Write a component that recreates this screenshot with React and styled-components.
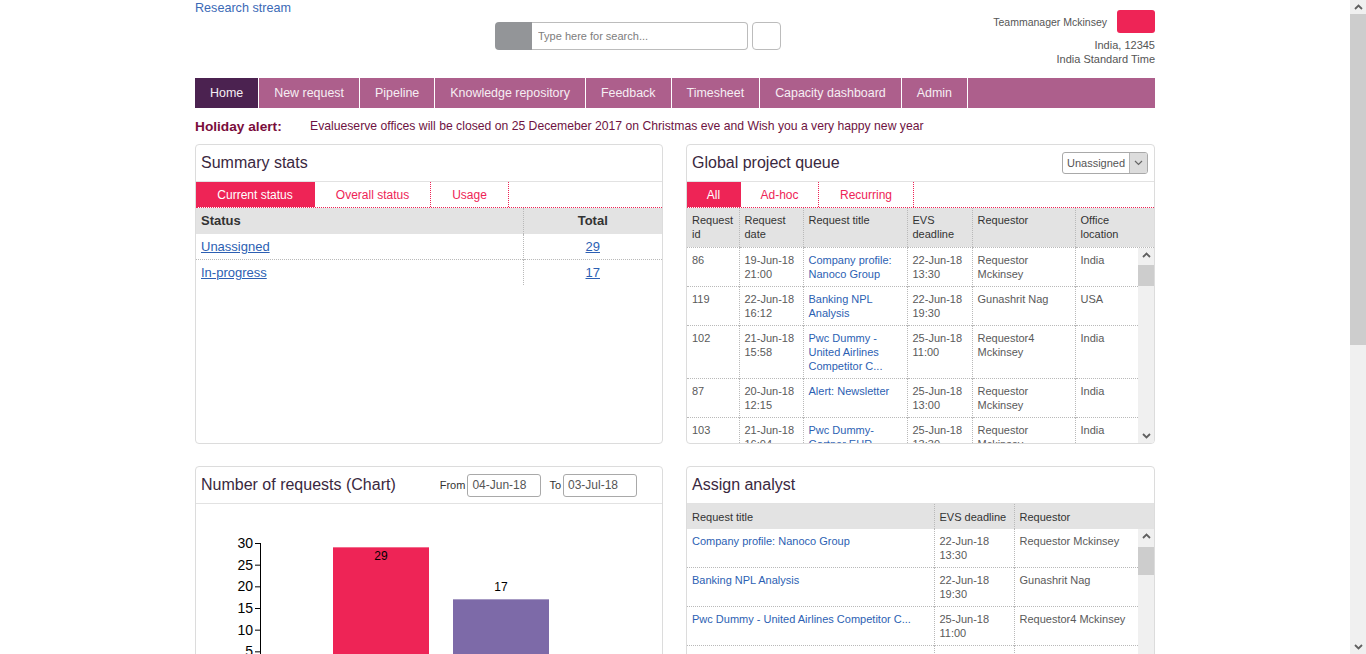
import React from 'react';
import styled, { createGlobalStyle } from 'styled-components';

const GlobalStyle = createGlobalStyle`
  html, body {
    margin: 0;
    padding: 0;
    background: #fff;
    font-family: "Liberation Sans", Arial, sans-serif;
  }
`;

const Shell = styled.div`
  padding-right: 16px;
  min-height: 1235px;
`;

const Page = styled.div`
  width: 960px;
  margin: 0 auto;
`;

const TopBar = styled.div`
  display: grid;
  grid-template-columns: 300px 286px 1fr;
  height: 78px;
`;

const Brand = styled.a`
  display: block;
  font-size: 12.6px;
  line-height: 16px;
  color: #3b69b6;
  text-decoration: none;
`;

const SearchGroup = styled.div`
  display: flex;
  align-items: center;
  margin-top: 22px;
  height: 28px;
`;

const SearchAddon = styled.div`
  width: 37px;
  height: 28px;
  background: #939598;
  border-radius: 4px 0 0 4px;
`;

const SearchInput = styled.input`
  width: 216px;
  height: 28px;
  box-sizing: border-box;
  border: 1px solid #bcbcbc;
  border-left: none;
  border-radius: 0 4px 4px 0;
  padding: 0 6px;
  font-family: inherit;
  font-size: 11px;
  color: #555;
  outline: none;
  &::placeholder {
    color: #7d7d7d;
  }
`;

const SearchButton = styled.button`
  width: 29px;
  height: 28px;
  margin-left: 4px;
  box-sizing: border-box;
  border: 1px solid #bcbcbc;
  border-radius: 4px;
  background: #fff;
`;

const UserBlock = styled.div`
  justify-self: end;
  display: flex;
  flex-direction: column;
  align-items: flex-end;
  padding-top: 10px;
  font-size: 11px;
  color: #555;
`;

const UserRow = styled.div`
  display: flex;
  align-items: center;
  gap: 10px;
  margin-bottom: 5px;
  font-size: 10.5px;
`;

const Avatar = styled.div`
  width: 38px;
  height: 23px;
  border-radius: 3px;
  background: #ee2456;
`;

const InfoLine = styled.div`
  line-height: 14px;
`;

const Nav = styled.div`
  display: flex;
  height: 30px;
  background: #ad5f8c;
`;

const NavItem = styled.a`
  display: flex;
  align-items: center;
  padding: 0 15px;
  font-size: 12.45px;
  color: #f6eef3;
  text-decoration: none;
  border-right: 1px solid #fff;
  background: ${p => (p.$active ? '#4b2250' : '#ad5f8c')};
`;

const Alert = styled.div`
  display: flex;
  align-items: center;
  height: 36px;
  font-size: 12.2px;
  color: #6e1342;
`;

const AlertLabel = styled.span`
  width: 115px;
  font-size: 13.7px;
  font-weight: bold;
  color: #7a0d3c;
`;

const Grid = styled.div`
  display: grid;
  grid-template-columns: 468px 469px;
  column-gap: 23px;
  row-gap: 22px;
`;

const Panel = styled.div`
  height: ${p => p.$h}px;
  box-sizing: border-box;
  border: 1px solid #dcdcdc;
  border-radius: 4px;
  background: #fff;
  overflow: hidden;
  display: flex;
  flex-direction: column;
`;

const PanelHead = styled.div`
  height: 36px;
  flex: none;
  display: flex;
  align-items: center;
  justify-content: space-between;
  padding: 0 6px 0 5px;
  border-bottom: 1px solid #e2e2e2;
`;

const Title = styled.h3`
  margin: 0;
  font-size: 16px;
  font-weight: normal;
  color: #3a2840;
`;

const Tabs = styled.div`
  display: flex;
  height: 25px;
  flex: none;
  border-bottom: 1px dotted #ee2456;
`;

const Tab = styled.div`
  width: ${p => p.$w}px;
  box-sizing: border-box;
  display: flex;
  align-items: center;
  justify-content: center;
  font-size: 12px;
  color: ${p => (p.$active ? '#fff' : '#ee2456')};
  background: ${p => (p.$active ? '#ee2456' : 'transparent')};
  border-right: 1px dotted #ee2456;
`;

const Table = styled.table`
  width: 100%;
  border-collapse: collapse;
  table-layout: fixed;
  font-size: ${p => p.$fs || 11}px;
`;

const Th = styled.th`
  box-sizing: border-box;
  background: #e3e3e3;
  color: #333;
  font-weight: ${p => (p.$bold ? 'bold' : 'normal')};
  text-align: ${p => p.$align || 'left'};
  vertical-align: ${p => (p.$middle ? 'middle' : 'top')};
  height: ${p => p.$h || 25}px;
  padding: ${p => (p.$middle ? '0 5px' : '5px 5px 0')};
  line-height: 14px;
  border-left: 1px dotted #b9b9b9;
  border-bottom: ${p => (p.$divider ? '1px dotted #b9b9b9' : 'none')};
  &:first-child {
    border-left: none;
  }
`;

const Td = styled.td`
  color: #5a5a5a;
  text-align: ${p => p.$align || 'left'};
  vertical-align: ${p => (p.$middle ? 'middle' : 'top')};
  height: ${p => p.$h || 'auto'};
  padding: ${p => (p.$middle ? '0 5px' : '5px')};
  line-height: 14px;
  border-left: 1px dotted #b9b9b9;
  border-top: 1px dotted #b9b9b9;
  &:first-child {
    border-left: none;
  }
`;

const Row = styled.tr`
  &:first-child td {
    border-top: none;
  }
`;

const Link = styled.a`
  color: #2c5fb3;
  text-decoration: ${p => (p.$under ? 'underline' : 'none')};
  cursor: pointer;
`;

const ScrollArea = styled.div`
  flex: 1;
  min-height: 0;
  display: flex;
`;

const ScrollContent = styled.div`
  flex: 1;
  overflow: hidden;
`;

const Track = styled.div`
  width: 16px;
  flex: none;
  display: flex;
  flex-direction: column;
  background: #f0f0f0;
`;

const PageTrack = styled(Track)`
  position: fixed;
  top: 0;
  right: 0;
  height: 100vh;
`;

const TrackButton = styled.div`
  height: 14px;
  flex: none;
  display: flex;
  align-items: center;
  justify-content: center;
`;

const Thumb = styled.div`
  flex: none;
  margin-top: ${p => p.$offset}px;
  height: ${p => p.$size}px;
  background: #cdcdcd;
`;

const TrackFill = styled.div`
  flex: 1;
`;

const Select = styled.div`
  display: flex;
  width: 86px;
  height: 22px;
  box-sizing: border-box;
  border: 1px solid #a9a9a9;
  border-radius: 3px;
  overflow: hidden;
  font-size: 11px;
  color: #555;
`;

const SelectText = styled.div`
  flex: 1;
  display: flex;
  align-items: center;
  padding-left: 4px;
`;

const SelectArrow = styled.div`
  width: 17px;
  display: flex;
  align-items: center;
  justify-content: center;
  background: #dcdcdc;
  border-left: 1px solid #b5b5b5;
`;

const DateFilter = styled.div`
  display: flex;
  align-items: center;
  gap: 2px;
  font-size: 11px;
  color: #333;
  margin-right: 13px;
`;

const DateInput = styled.input`
  width: 74px;
  height: 23px;
  box-sizing: border-box;
  border: 1px solid #a9a9a9;
  border-radius: 3px;
  padding: 0 4px;
  font-family: inherit;
  font-size: 12px;
  color: #555;
  margin-right: 6px;
`;

const ChartBody = styled.div`
  flex: 1;
`;

const Chevron = ({ up }) => (
  <svg width="9" height="6" viewBox="0 0 9 6">
    <path d={up ? 'M1 5 L4.5 1.5 L8 5' : 'M1 1 L4.5 4.5 L8 1'} fill="none" stroke="#606060" strokeWidth="1.8" />
  </svg>
);

const ScrollBar = ({ offset, size, as }) => {
  const Comp = as || Track;
  return (
    <Comp>
      <TrackButton><Chevron up /></TrackButton>
      <Thumb $offset={offset} $size={size} />
      <TrackFill />
      <TrackButton><Chevron /></TrackButton>
    </Comp>
  );
};

const queue = [
  ['86', '19-Jun-18', '21:00', 'Company profile: Nanoco Group', '22-Jun-18', '13:30', 'Requestor Mckinsey', 'India'],
  ['119', '22-Jun-18', '16:12', 'Banking NPL Analysis', '22-Jun-18', '19:30', 'Gunashrit Nag', 'USA'],
  ['102', '21-Jun-18', '15:58', 'Pwc Dummy - United Airlines Competitor C...', '25-Jun-18', '11:00', 'Requestor4 Mckinsey', 'India'],
  ['87', '20-Jun-18', '12:15', 'Alert: Newsletter', '25-Jun-18', '13:00', 'Requestor Mckinsey', 'India'],
  ['103', '21-Jun-18', '16:04', 'Pwc Dummy- Gartner EHR', '25-Jun-18', '13:30', 'Requestor Mckinsey', 'India'],
  ['104', '21-Jun-18', '16:20', 'Pwc Dummy- Industry Overview', '26-Jun-18', '12:00', 'Requestor Mckinsey', 'India'],
  ['120', '22-Jun-18', '17:05', 'Company profile: Acme Ltd', '27-Jun-18', '18:00', 'Gunashrit Nag', 'USA'],
];

const queueCols = [52, 64, 104, 65, 103];

const assign = [
  ['Company profile: Nanoco Group', '22-Jun-18', '13:30', 'Requestor Mckinsey'],
  ['Banking NPL Analysis', '22-Jun-18', '19:30', 'Gunashrit Nag'],
  ['Pwc Dummy - United Airlines Competitor C...', '25-Jun-18', '11:00', 'Requestor4 Mckinsey'],
  ['Alert: Newsletter', '25-Jun-18', '13:00', 'Requestor Mckinsey'],
  ['Pwc Dummy- Gartner EHR', '25-Jun-18', '13:30', 'Requestor Mckinsey'],
  ['Pwc Dummy- Industry Overview', '26-Jun-18', '12:00', 'Requestor Mckinsey'],
  ['Company profile: Acme Ltd', '27-Jun-18', '18:00', 'Gunashrit Nag'],
];

const assignCols = [247, 80];

const navItems = ['Home', 'New request', 'Pipeline', 'Knowledge repository', 'Feedback', 'Timesheet', 'Capacity dashboard', 'Admin'];

const Chart = () => {
  const y0 = 169;
  const k = 130 / 30;
  const ticks = [0, 5, 10, 15, 20, 25, 30];
  const bars = [
    { v: 29, x: 137, color: '#ee2456', label: 'Unassigned', inside: true },
    { v: 17, x: 257, color: '#7d6aa8', label: 'In-progress' },
  ];
  const font = 'Liberation Sans, Arial, sans-serif';
  return (
    <svg width="466" height="230" style={{ display: 'block' }}>
      <line x1="64.5" y1={y0 - 130} x2="64.5" y2={y0} stroke="#000" />
      <line x1="64" y1={y0 + 0.5} x2="420" y2={y0 + 0.5} stroke="#000" />
      {ticks.map(t => (
        <g key={t}>
          <line x1="59" y1={y0 - t * k + 0.5} x2="64" y2={y0 - t * k + 0.5} stroke="#000" />
          <text x="57" y={y0 - t * k + 5} textAnchor="end" fontSize="14" fontFamily={font} fill="#000">{t}</text>
        </g>
      ))}
      {bars.map(b => (
        <g key={b.label}>
          <rect x={b.x} y={y0 - b.v * k} width="96" height={b.v * k} fill={b.color} />
          <text x={b.x + 48} y={b.inside ? y0 - b.v * k + 13 : y0 - b.v * k - 8} textAnchor="middle" fontSize="12" fontFamily={font} fill="#000">{b.v}</text>
          <text x={b.x + 48} y={y0 + 18} textAnchor="middle" fontSize="12" fontFamily={font} fill="#333">{b.label}</text>
        </g>
      ))}
    </svg>
  );
};

const App = () => {
  return (
    <Shell>
      <GlobalStyle />
      <Page>
        <TopBar>
          <div>
            <Brand href="#">Research stream</Brand>
          </div>
          <SearchGroup>
            <SearchAddon />
            <SearchInput type="text" placeholder="Type here for search..." />
            <SearchButton type="button" />
          </SearchGroup>
          <UserBlock>
            <UserRow>
              <span>Teammanager Mckinsey</span>
              <Avatar />
            </UserRow>
            <InfoLine>India, 12345</InfoLine>
            <InfoLine>India Standard Time</InfoLine>
          </UserBlock>
        </TopBar>

        <Nav>
          {navItems.map((n, i) => (
            <NavItem key={n} href="#" $active={i === 0}>{n}</NavItem>
          ))}
        </Nav>

        <Alert>
          <AlertLabel>Holiday alert:</AlertLabel>
          <span>Evalueserve offices will be closed on 25 Decemeber 2017 on Christmas eve and Wish you a very happy new year</span>
        </Alert>

        <Grid>
          <Panel $h={300}>
            <PanelHead>
              <Title>Summary stats</Title>
            </PanelHead>
            <Tabs>
              <Tab $w={119} $active>Current status</Tab>
              <Tab $w={116}>Overall status</Tab>
              <Tab $w={78}>Usage</Tab>
            </Tabs>
            <Table $fs={13}>
              <colgroup>
                <col style={{ width: 327 }} />
                <col />
              </colgroup>
              <thead>
                <tr>
                  <Th $bold $middle $h={26}>Status</Th>
                  <Th $bold $middle $h={26} $align="center">Total</Th>
                </tr>
              </thead>
              <tbody>
                <Row>
                  <Td $middle $h="25px"><Link $under>Unassigned</Link></Td>
                  <Td $middle $align="center"><Link $under>29</Link></Td>
                </Row>
                <Row>
                  <Td $middle $h="25px"><Link $under>In-progress</Link></Td>
                  <Td $middle $align="center"><Link $under>17</Link></Td>
                </Row>
              </tbody>
            </Table>
          </Panel>

          <Panel $h={300}>
            <PanelHead>
              <Title>Global project queue</Title>
              <Select>
                <SelectText>Unassigned</SelectText>
                <SelectArrow>
                  <svg width="9" height="6" viewBox="0 0 9 6">
                    <path d="M1 1 L4.5 4.5 L8 1" fill="none" stroke="#666" strokeWidth="1.2" />
                  </svg>
                </SelectArrow>
              </Select>
            </PanelHead>
            <Tabs>
              <Tab $w={54} $active>All</Tab>
              <Tab $w={78}>Ad-hoc</Tab>
              <Tab $w={95}>Recurring</Tab>
            </Tabs>
            <Table>
              <colgroup>
                {queueCols.map((w, i) => <col key={i} style={{ width: w }} />)}
                <col />
              </colgroup>
              <thead>
                <tr>
                  <Th $h={39} $divider>Request id</Th>
                  <Th $h={39} $divider>Request date</Th>
                  <Th $h={39} $divider>Request title</Th>
                  <Th $h={39} $divider>EVS deadline</Th>
                  <Th $h={39} $divider>Requestor</Th>
                  <Th $h={39} $divider>Office location</Th>
                </tr>
              </thead>
            </Table>
            <ScrollArea>
              <ScrollContent>
                <Table>
                  <colgroup>
                    {queueCols.map((w, i) => <col key={i} style={{ width: w }} />)}
                    <col />
                  </colgroup>
                  <tbody>
                    {queue.map(r => (
                      <Row key={r[0]}>
                        <Td>{r[0]}</Td>
                        <Td>{r[1]}<br />{r[2]}</Td>
                        <Td><Link>{r[3]}</Link></Td>
                        <Td>{r[4]}<br />{r[5]}</Td>
                        <Td>{r[6]}</Td>
                        <Td>{r[7]}</Td>
                      </Row>
                    ))}
                  </tbody>
                </Table>
              </ScrollContent>
              <ScrollBar offset={3} size={21} />
            </ScrollArea>
          </Panel>

          <Panel $h={300}>
            <PanelHead>
              <Title>Number of requests (Chart)</Title>
              <DateFilter>
                <span>From</span>
                <DateInput type="text" defaultValue="04-Jun-18" />
                <span>To</span>
                <DateInput type="text" defaultValue="03-Jul-18" />
              </DateFilter>
            </PanelHead>
            <ChartBody>
              <Chart />
            </ChartBody>
          </Panel>

          <Panel $h={300}>
            <PanelHead>
              <Title>Assign analyst</Title>
            </PanelHead>
            <Table>
              <colgroup>
                {assignCols.map((w, i) => <col key={i} style={{ width: w }} />)}
                <col />
              </colgroup>
              <thead>
                <tr>
                  <Th $middle $h={25}>Request title</Th>
                  <Th $middle $h={25}>EVS deadline</Th>
                  <Th $middle $h={25}>Requestor</Th>
                </tr>
              </thead>
            </Table>
            <ScrollArea>
              <ScrollContent>
                <Table>
                  <colgroup>
                    {assignCols.map((w, i) => <col key={i} style={{ width: w }} />)}
                    <col />
                  </colgroup>
                  <tbody>
                    {assign.map(r => (
                      <Row key={r[0]}>
                        <Td><Link>{r[0]}</Link></Td>
                        <Td>{r[1]}<br />{r[2]}</Td>
                        <Td>{r[3]}</Td>
                      </Row>
                    ))}
                  </tbody>
                </Table>
              </ScrollContent>
              <ScrollBar offset={4} size={28} />
            </ScrollArea>
          </Panel>
        </Grid>
      </Page>
      <ScrollBar as={PageTrack} offset={0} size={331} />
    </Shell>
  );
};

export default App;
